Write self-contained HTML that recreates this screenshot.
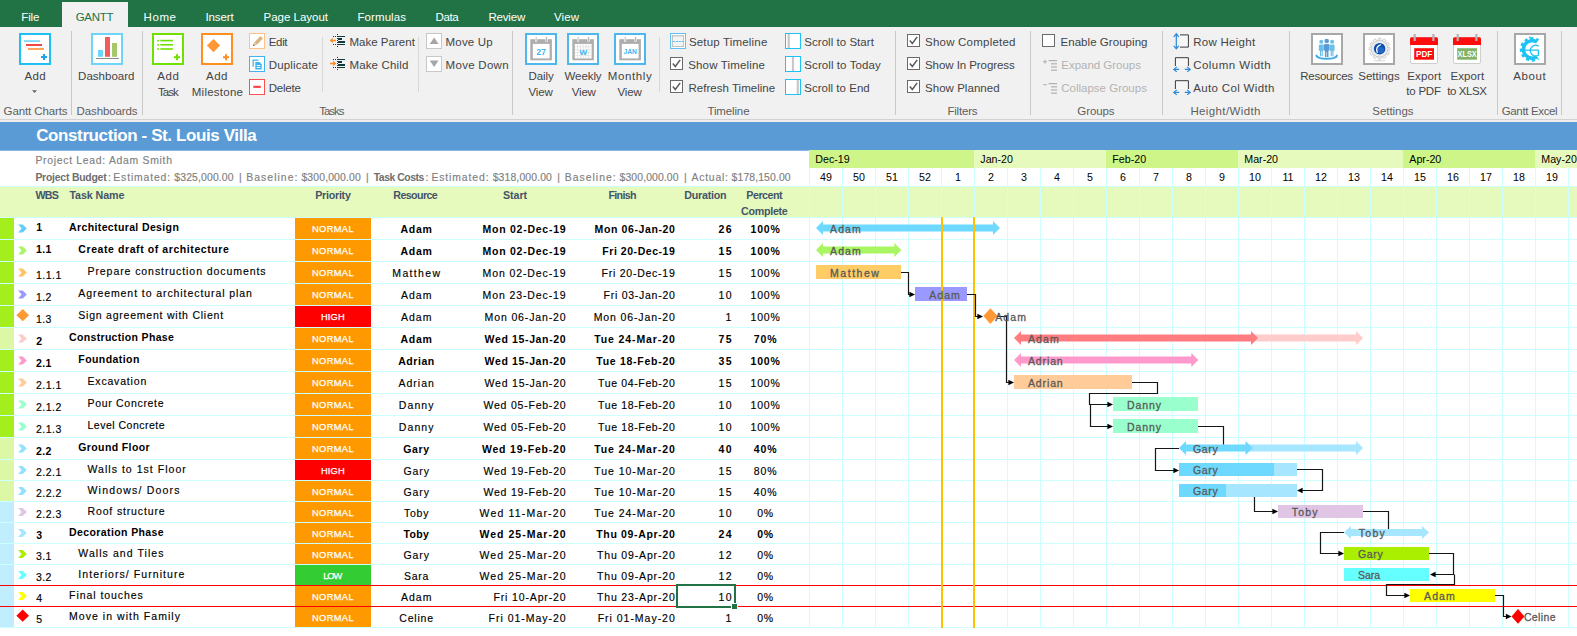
<!DOCTYPE html>
<html><head><meta charset="utf-8"><title>Gantt</title>
<style>
html,body{margin:0;padding:0;background:#fff;}
body{width:1577px;height:636px;position:relative;overflow:hidden;font-family:"Liberation Sans",sans-serif;}
.t{position:absolute;white-space:nowrap;line-height:20px;font-family:"Liberation Sans",sans-serif;}
.s{-webkit-text-stroke:0.15px;}
</style></head><body>
<div style="position:absolute;left:0;top:121px;width:1577px;height:1px;background:#c6d6e6"></div>
<div style="position:absolute;left:0;top:122px;width:1577px;height:28px;background:#5b9bd5"></div>
<div style="position:absolute;left:0;top:150px;width:809px;height:1px;background:#8ab8e2"></div>
<div class="t" style="left:36.20px;top:126.00px;font-size:17px;color:#fff;font-weight:bold;letter-spacing:-0.394px;">Construction - St. Louis Villa</div>
<div class="t s" style="left:35.40px;top:151.00px;font-size:10.4px;color:#808080;letter-spacing:0.716px;">Project Lead: Adam Smith</div>
<div class="t" style="left:35.40px;top:168.00px;font-size:10.4px;color:#6e6e6e;font-weight:bold;letter-spacing:-0.203px;">Project Budget</div>
<div class="t s" style="left:107.90px;top:168.00px;font-size:10.4px;color:#808080;">:</div>
<div class="t s" style="left:113.30px;top:168.00px;font-size:10.4px;color:#808080;letter-spacing:0.862px;">Estimated:</div>
<div class="t s" style="left:174.30px;top:168.00px;font-size:10.4px;color:#808080;letter-spacing:0.148px;">$325,000.00</div>
<div class="t s" style="left:238.90px;top:168.00px;font-size:10.4px;color:#808080;">|</div>
<div class="t s" style="left:246.30px;top:168.00px;font-size:10.4px;color:#808080;letter-spacing:1.038px;">Baseline:</div>
<div class="t s" style="left:301.40px;top:168.00px;font-size:10.4px;color:#808080;letter-spacing:0.158px;">$300,000.00</div>
<div class="t s" style="left:366.10px;top:168.00px;font-size:10.4px;color:#808080;">|</div>
<div class="t s" style="left:425.50px;top:168.00px;font-size:10.4px;color:#808080;">:</div>
<div class="t s" style="left:431.40px;top:168.00px;font-size:10.4px;color:#808080;letter-spacing:0.896px;">Estimated:</div>
<div class="t s" style="left:492.70px;top:168.00px;font-size:10.4px;color:#808080;letter-spacing:0.138px;">$318,000.00</div>
<div class="t s" style="left:557.30px;top:168.00px;font-size:10.4px;color:#808080;">|</div>
<div class="t s" style="left:564.70px;top:168.00px;font-size:10.4px;color:#808080;letter-spacing:1.038px;">Baseline:</div>
<div class="t s" style="left:619.60px;top:168.00px;font-size:10.4px;color:#808080;letter-spacing:0.108px;">$300,000.00</div>
<div class="t s" style="left:684.10px;top:168.00px;font-size:10.4px;color:#808080;">|</div>
<div class="t s" style="left:691.40px;top:168.00px;font-size:10.4px;color:#808080;letter-spacing:0.805px;">Actual:</div>
<div class="t s" style="left:731.60px;top:168.00px;font-size:10.4px;color:#808080;letter-spacing:0.118px;">$178,150.00</div>
<div class="t" style="left:373.70px;top:168.00px;font-size:10.4px;color:#6e6e6e;font-weight:bold;letter-spacing:-0.456px;">Task Costs</div>
<div style="position:absolute;left:0;top:186px;width:1577px;height:31px;background:#e6fabd"></div>
<div style="position:absolute;left:809px;top:150px;width:165px;height:18px;background:#cdf587"></div>
<div class="t" style="left:815.30px;top:149.00px;font-size:10.67px;color:#000;">Dec-19</div>
<div style="position:absolute;left:974px;top:150px;width:132px;height:18px;background:#e6fabd"></div>
<div class="t" style="left:980.30px;top:149.00px;font-size:10.67px;color:#000;">Jan-20</div>
<div style="position:absolute;left:1106px;top:150px;width:132px;height:18px;background:#cdf587"></div>
<div class="t" style="left:1112.30px;top:149.00px;font-size:10.67px;color:#000;">Feb-20</div>
<div style="position:absolute;left:1238px;top:150px;width:165px;height:18px;background:#e6fabd"></div>
<div class="t" style="left:1244.30px;top:149.00px;font-size:10.67px;color:#000;">Mar-20</div>
<div style="position:absolute;left:1403px;top:150px;width:132px;height:18px;background:#cdf587"></div>
<div class="t" style="left:1409.30px;top:149.00px;font-size:10.67px;color:#000;">Apr-20</div>
<div style="position:absolute;left:1535px;top:150px;width:42px;height:18px;background:#e6fabd"></div>
<div class="t" style="left:1541.30px;top:149.00px;font-size:10.67px;color:#000;">May-20</div>
<div class="t" style="left:820.08px;top:167.00px;font-size:10.67px;color:#000;">49</div>
<div class="t" style="left:853.08px;top:167.00px;font-size:10.67px;color:#000;">50</div>
<div class="t" style="left:886.08px;top:167.00px;font-size:10.67px;color:#000;">51</div>
<div class="t" style="left:919.08px;top:167.00px;font-size:10.67px;color:#000;">52</div>
<div class="t" style="left:955.04px;top:167.00px;font-size:10.67px;color:#000;">1</div>
<div class="t" style="left:988.04px;top:167.00px;font-size:10.67px;color:#000;">2</div>
<div class="t" style="left:1021.04px;top:167.00px;font-size:10.67px;color:#000;">3</div>
<div class="t" style="left:1054.04px;top:167.00px;font-size:10.67px;color:#000;">4</div>
<div class="t" style="left:1087.04px;top:167.00px;font-size:10.67px;color:#000;">5</div>
<div class="t" style="left:1120.04px;top:167.00px;font-size:10.67px;color:#000;">6</div>
<div class="t" style="left:1153.04px;top:167.00px;font-size:10.67px;color:#000;">7</div>
<div class="t" style="left:1186.04px;top:167.00px;font-size:10.67px;color:#000;">8</div>
<div class="t" style="left:1219.04px;top:167.00px;font-size:10.67px;color:#000;">9</div>
<div class="t" style="left:1249.08px;top:167.00px;font-size:10.67px;color:#000;">10</div>
<div class="t" style="left:1282.45px;top:167.00px;font-size:10.67px;color:#000;">11</div>
<div class="t" style="left:1315.08px;top:167.00px;font-size:10.67px;color:#000;">12</div>
<div class="t" style="left:1348.08px;top:167.00px;font-size:10.67px;color:#000;">13</div>
<div class="t" style="left:1381.08px;top:167.00px;font-size:10.67px;color:#000;">14</div>
<div class="t" style="left:1414.08px;top:167.00px;font-size:10.67px;color:#000;">15</div>
<div class="t" style="left:1447.08px;top:167.00px;font-size:10.67px;color:#000;">16</div>
<div class="t" style="left:1480.08px;top:167.00px;font-size:10.67px;color:#000;">17</div>
<div class="t" style="left:1513.08px;top:167.00px;font-size:10.67px;color:#000;">18</div>
<div class="t" style="left:1546.08px;top:167.00px;font-size:10.67px;color:#000;">19</div>
<div class="t" style="left:35.50px;top:185.00px;font-size:10.7px;color:#44546a;font-weight:bold;letter-spacing:-0.792px;">WBS</div>
<div class="t" style="left:69.40px;top:185.00px;font-size:10.7px;color:#44546a;font-weight:bold;letter-spacing:-0.074px;">Task Name</div>
<div class="t" style="left:315.20px;top:185.00px;font-size:10.7px;color:#44546a;font-weight:bold;letter-spacing:-0.250px;">Priority</div>
<div class="t" style="left:393.30px;top:185.00px;font-size:10.7px;color:#44546a;font-weight:bold;letter-spacing:-0.613px;">Resource</div>
<div class="t" style="left:503.00px;top:185.00px;font-size:10.7px;color:#44546a;font-weight:bold;letter-spacing:-0.049px;">Start</div>
<div class="t" style="left:608.40px;top:185.00px;font-size:10.7px;color:#44546a;font-weight:bold;letter-spacing:-0.662px;">Finish</div>
<div class="t" style="left:684.30px;top:185.00px;font-size:10.7px;color:#44546a;font-weight:bold;letter-spacing:-0.240px;">Duration</div>
<div class="t" style="left:746.30px;top:185.00px;font-size:10.7px;color:#44546a;font-weight:bold;letter-spacing:-0.478px;">Percent</div>
<div class="t" style="left:741.10px;top:201.00px;font-size:10.7px;color:#44546a;font-weight:bold;letter-spacing:-0.291px;">Complete</div>
<div style="position:absolute;left:0;top:218px;width:14px;height:21px;background:#a5ee1e"></div>
<div style="position:absolute;left:295px;top:218px;width:76px;height:21px;background:#ff9900"></div>
<div class="t" style="left:36.30px;top:217.00px;font-size:10.5px;color:#000;font-weight:bold;">1</div>
<div class="t" style="left:69.10px;top:217.00px;font-size:10.5px;color:#000;font-weight:bold;letter-spacing:0.369px;">Architectural Design</div>
<div class="t" style="left:312.00px;top:219.00px;font-size:9.3px;color:#fff;letter-spacing:0.359px;-webkit-text-stroke:0.25px;">NORMAL</div>
<div class="t" style="left:400.60px;top:219.00px;font-size:10.5px;color:#000;font-weight:bold;letter-spacing:0.670px;">Adam</div>
<div class="t" style="left:482.60px;top:219.00px;font-size:10.5px;color:#000;font-weight:bold;letter-spacing:0.739px;">Mon 02-Dec-19</div>
<div class="t" style="left:594.60px;top:219.00px;font-size:10.5px;color:#000;font-weight:bold;letter-spacing:0.606px;">Mon 06-Jan-20</div>
<div class="t" style="left:718.40px;top:219.00px;font-size:10.5px;color:#000;font-weight:bold;letter-spacing:1.545px;">26</div>
<div class="t" style="left:750.60px;top:219.00px;font-size:10.5px;color:#000;font-weight:bold;letter-spacing:0.773px;">100%</div>
<div style="position:absolute;left:0;top:240px;width:14px;height:21px;background:#a5ee1e"></div>
<div style="position:absolute;left:295px;top:240px;width:76px;height:21px;background:#ff9900"></div>
<div class="t" style="left:35.90px;top:239.00px;font-size:10.5px;color:#000;font-weight:bold;letter-spacing:0.453px;">1.1</div>
<div class="t" style="left:78.30px;top:239.00px;font-size:10.5px;color:#000;font-weight:bold;letter-spacing:0.583px;">Create draft of architecture</div>
<div class="t" style="left:312.00px;top:241.00px;font-size:9.3px;color:#fff;letter-spacing:0.359px;-webkit-text-stroke:0.25px;">NORMAL</div>
<div class="t" style="left:400.60px;top:241.00px;font-size:10.5px;color:#000;font-weight:bold;letter-spacing:0.670px;">Adam</div>
<div class="t" style="left:482.60px;top:241.00px;font-size:10.5px;color:#000;font-weight:bold;letter-spacing:0.739px;">Mon 02-Dec-19</div>
<div class="t" style="left:602.30px;top:241.00px;font-size:10.5px;color:#000;font-weight:bold;letter-spacing:0.547px;">Fri 20-Dec-19</div>
<div class="t" style="left:718.40px;top:241.00px;font-size:10.5px;color:#000;font-weight:bold;letter-spacing:1.545px;">15</div>
<div class="t" style="left:750.60px;top:241.00px;font-size:10.5px;color:#000;font-weight:bold;letter-spacing:0.773px;">100%</div>
<div style="position:absolute;left:0;top:262px;width:14px;height:21px;background:#a5ee1e"></div>
<div style="position:absolute;left:295px;top:262px;width:76px;height:21px;background:#ff9900"></div>
<div class="t s" style="left:35.90px;top:265.00px;font-size:10.5px;color:#000;letter-spacing:0.534px;">1.1.1</div>
<div class="t s" style="left:87.50px;top:261.00px;font-size:10.5px;color:#000;letter-spacing:0.926px;">Prepare construction documents</div>
<div class="t" style="left:312.00px;top:263.00px;font-size:9.3px;color:#fff;letter-spacing:0.359px;-webkit-text-stroke:0.25px;">NORMAL</div>
<div class="t s" style="left:392.35px;top:263.00px;font-size:10.5px;color:#000;letter-spacing:1.335px;">Matthew</div>
<div class="t s" style="left:482.60px;top:263.00px;font-size:10.5px;color:#000;letter-spacing:0.888px;">Mon 02-Dec-19</div>
<div class="t s" style="left:601.60px;top:263.00px;font-size:10.5px;color:#000;letter-spacing:0.749px;">Fri 20-Dec-19</div>
<div class="t s" style="left:718.40px;top:263.00px;font-size:10.5px;color:#000;letter-spacing:1.545px;">15</div>
<div class="t s" style="left:750.60px;top:263.00px;font-size:10.5px;color:#000;letter-spacing:0.773px;">100%</div>
<div style="position:absolute;left:0;top:284px;width:14px;height:21px;background:#a5ee1e"></div>
<div style="position:absolute;left:295px;top:284px;width:76px;height:21px;background:#ff9900"></div>
<div class="t s" style="left:35.90px;top:287.00px;font-size:10.5px;color:#000;letter-spacing:0.453px;">1.2</div>
<div class="t s" style="left:78.30px;top:283.00px;font-size:10.5px;color:#000;letter-spacing:0.923px;">Agreement to architectural plan</div>
<div class="t" style="left:312.00px;top:285.00px;font-size:9.3px;color:#fff;letter-spacing:0.359px;-webkit-text-stroke:0.25px;">NORMAL</div>
<div class="t s" style="left:400.90px;top:285.00px;font-size:10.5px;color:#000;letter-spacing:1.065px;">Adam</div>
<div class="t s" style="left:482.60px;top:285.00px;font-size:10.5px;color:#000;letter-spacing:0.888px;">Mon 23-Dec-19</div>
<div class="t s" style="left:603.60px;top:285.00px;font-size:10.5px;color:#000;letter-spacing:0.731px;">Fri 03-Jan-20</div>
<div class="t s" style="left:718.40px;top:285.00px;font-size:10.5px;color:#000;letter-spacing:1.545px;">10</div>
<div class="t s" style="left:750.60px;top:285.00px;font-size:10.5px;color:#000;letter-spacing:0.773px;">100%</div>
<div style="position:absolute;left:0;top:306px;width:14px;height:21px;background:#a5ee1e"></div>
<div style="position:absolute;left:295px;top:306px;width:76px;height:21px;background:#ff0000"></div>
<div class="t s" style="left:35.90px;top:309.00px;font-size:10.5px;color:#000;letter-spacing:0.453px;">1.3</div>
<div class="t s" style="left:78.30px;top:305.00px;font-size:10.5px;color:#000;letter-spacing:0.773px;">Sign agreement with Client</div>
<div class="t" style="left:320.95px;top:307.00px;font-size:9.3px;color:#fff;letter-spacing:0.150px;-webkit-text-stroke:0.25px;">HIGH</div>
<div class="t s" style="left:400.90px;top:307.00px;font-size:10.5px;color:#000;letter-spacing:1.065px;">Adam</div>
<div class="t s" style="left:484.60px;top:307.00px;font-size:10.5px;color:#000;letter-spacing:0.866px;">Mon 06-Jan-20</div>
<div class="t s" style="left:593.70px;top:307.00px;font-size:10.5px;color:#000;letter-spacing:0.874px;">Mon 06-Jan-20</div>
<div class="t s" style="left:725.47px;top:307.00px;font-size:10.5px;color:#000;">1</div>
<div class="t s" style="left:750.60px;top:307.00px;font-size:10.5px;color:#000;letter-spacing:0.773px;">100%</div>
<div style="position:absolute;left:0;top:328px;width:14px;height:21px;background:#dcf7a6"></div>
<div style="position:absolute;left:295px;top:328px;width:76px;height:21px;background:#ff9900"></div>
<div class="t" style="left:36.30px;top:331.00px;font-size:10.5px;color:#000;font-weight:bold;">2</div>
<div class="t" style="left:69.10px;top:327.00px;font-size:10.5px;color:#000;font-weight:bold;letter-spacing:0.325px;">Construction Phase</div>
<div class="t" style="left:312.00px;top:329.00px;font-size:9.3px;color:#fff;letter-spacing:0.359px;-webkit-text-stroke:0.25px;">NORMAL</div>
<div class="t" style="left:400.60px;top:329.00px;font-size:10.5px;color:#000;font-weight:bold;letter-spacing:0.670px;">Adam</div>
<div class="t" style="left:484.60px;top:329.00px;font-size:10.5px;color:#000;font-weight:bold;letter-spacing:0.638px;">Wed 15-Jan-20</div>
<div class="t" style="left:594.20px;top:329.00px;font-size:10.5px;color:#000;font-weight:bold;letter-spacing:0.898px;">Tue 24-Mar-20</div>
<div class="t" style="left:718.40px;top:329.00px;font-size:10.5px;color:#000;font-weight:bold;letter-spacing:1.545px;">75</div>
<div class="t" style="left:753.70px;top:329.00px;font-size:10.5px;color:#000;font-weight:bold;letter-spacing:1.000px;">70%</div>
<div style="position:absolute;left:0;top:350px;width:14px;height:21px;background:#a5ee1e"></div>
<div style="position:absolute;left:295px;top:350px;width:76px;height:21px;background:#ff9900"></div>
<div class="t" style="left:35.90px;top:353.00px;font-size:10.5px;color:#000;font-weight:bold;letter-spacing:0.453px;">2.1</div>
<div class="t" style="left:78.30px;top:349.00px;font-size:10.5px;color:#000;font-weight:bold;letter-spacing:0.436px;">Foundation</div>
<div class="t" style="left:312.00px;top:351.00px;font-size:9.3px;color:#fff;letter-spacing:0.359px;-webkit-text-stroke:0.25px;">NORMAL</div>
<div class="t" style="left:398.25px;top:351.00px;font-size:10.5px;color:#000;font-weight:bold;letter-spacing:0.533px;">Adrian</div>
<div class="t" style="left:484.60px;top:351.00px;font-size:10.5px;color:#000;font-weight:bold;letter-spacing:0.638px;">Wed 15-Jan-20</div>
<div class="t" style="left:596.30px;top:351.00px;font-size:10.5px;color:#000;font-weight:bold;letter-spacing:0.723px;">Tue 18-Feb-20</div>
<div class="t" style="left:718.40px;top:351.00px;font-size:10.5px;color:#000;font-weight:bold;letter-spacing:1.545px;">35</div>
<div class="t" style="left:750.60px;top:351.00px;font-size:10.5px;color:#000;font-weight:bold;letter-spacing:0.773px;">100%</div>
<div style="position:absolute;left:0;top:372px;width:14px;height:21px;background:#a5ee1e"></div>
<div style="position:absolute;left:295px;top:372px;width:76px;height:21px;background:#ff9900"></div>
<div class="t s" style="left:35.90px;top:375.00px;font-size:10.5px;color:#000;letter-spacing:0.534px;">2.1.1</div>
<div class="t s" style="left:87.50px;top:371.00px;font-size:10.5px;color:#000;letter-spacing:0.817px;">Excavation</div>
<div class="t" style="left:312.00px;top:373.00px;font-size:9.3px;color:#fff;letter-spacing:0.359px;-webkit-text-stroke:0.25px;">NORMAL</div>
<div class="t s" style="left:398.55px;top:373.00px;font-size:10.5px;color:#000;letter-spacing:0.991px;">Adrian</div>
<div class="t s" style="left:484.60px;top:373.00px;font-size:10.5px;color:#000;letter-spacing:0.783px;">Wed 15-Jan-20</div>
<div class="t s" style="left:598.10px;top:373.00px;font-size:10.5px;color:#000;letter-spacing:0.634px;">Tue 04-Feb-20</div>
<div class="t s" style="left:718.40px;top:373.00px;font-size:10.5px;color:#000;letter-spacing:1.545px;">15</div>
<div class="t s" style="left:750.60px;top:373.00px;font-size:10.5px;color:#000;letter-spacing:0.773px;">100%</div>
<div style="position:absolute;left:0;top:394px;width:14px;height:21px;background:#a5ee1e"></div>
<div style="position:absolute;left:295px;top:394px;width:76px;height:21px;background:#ff9900"></div>
<div class="t s" style="left:35.90px;top:397.00px;font-size:10.5px;color:#000;letter-spacing:0.534px;">2.1.2</div>
<div class="t s" style="left:87.50px;top:393.00px;font-size:10.5px;color:#000;letter-spacing:0.698px;">Pour Concrete</div>
<div class="t" style="left:312.00px;top:395.00px;font-size:9.3px;color:#fff;letter-spacing:0.359px;-webkit-text-stroke:0.25px;">NORMAL</div>
<div class="t s" style="left:398.85px;top:395.00px;font-size:10.5px;color:#000;letter-spacing:1.089px;">Danny</div>
<div class="t s" style="left:483.50px;top:395.00px;font-size:10.5px;color:#000;letter-spacing:0.778px;">Wed 05-Feb-20</div>
<div class="t s" style="left:598.10px;top:395.00px;font-size:10.5px;color:#000;letter-spacing:0.634px;">Tue 18-Feb-20</div>
<div class="t s" style="left:718.40px;top:395.00px;font-size:10.5px;color:#000;letter-spacing:1.545px;">10</div>
<div class="t s" style="left:750.60px;top:395.00px;font-size:10.5px;color:#000;letter-spacing:0.773px;">100%</div>
<div style="position:absolute;left:0;top:416px;width:14px;height:21px;background:#a5ee1e"></div>
<div style="position:absolute;left:295px;top:416px;width:76px;height:21px;background:#ff9900"></div>
<div class="t s" style="left:35.90px;top:419.00px;font-size:10.5px;color:#000;letter-spacing:0.534px;">2.1.3</div>
<div class="t s" style="left:87.50px;top:415.00px;font-size:10.5px;color:#000;letter-spacing:0.499px;">Level Concrete</div>
<div class="t" style="left:312.00px;top:417.00px;font-size:9.3px;color:#fff;letter-spacing:0.359px;-webkit-text-stroke:0.25px;">NORMAL</div>
<div class="t s" style="left:398.85px;top:417.00px;font-size:10.5px;color:#000;letter-spacing:1.089px;">Danny</div>
<div class="t s" style="left:483.50px;top:417.00px;font-size:10.5px;color:#000;letter-spacing:0.778px;">Wed 05-Feb-20</div>
<div class="t s" style="left:598.10px;top:417.00px;font-size:10.5px;color:#000;letter-spacing:0.634px;">Tue 18-Feb-20</div>
<div class="t s" style="left:718.40px;top:417.00px;font-size:10.5px;color:#000;letter-spacing:1.545px;">10</div>
<div class="t s" style="left:750.60px;top:417.00px;font-size:10.5px;color:#000;letter-spacing:0.773px;">100%</div>
<div style="position:absolute;left:0;top:438px;width:14px;height:21px;background:#dcf7a6"></div>
<div style="position:absolute;left:295px;top:438px;width:76px;height:21px;background:#ff9900"></div>
<div class="t" style="left:35.90px;top:441.00px;font-size:10.5px;color:#000;font-weight:bold;letter-spacing:0.453px;">2.2</div>
<div class="t" style="left:78.30px;top:437.00px;font-size:10.5px;color:#000;font-weight:bold;letter-spacing:0.382px;">Ground Floor</div>
<div class="t" style="left:312.00px;top:439.00px;font-size:9.3px;color:#fff;letter-spacing:0.359px;-webkit-text-stroke:0.25px;">NORMAL</div>
<div class="t" style="left:403.20px;top:439.00px;font-size:10.5px;color:#000;font-weight:bold;letter-spacing:0.687px;">Gary</div>
<div class="t" style="left:481.90px;top:439.00px;font-size:10.5px;color:#000;font-weight:bold;letter-spacing:0.815px;">Wed 19-Feb-20</div>
<div class="t" style="left:594.20px;top:439.00px;font-size:10.5px;color:#000;font-weight:bold;letter-spacing:0.898px;">Tue 24-Mar-20</div>
<div class="t" style="left:718.40px;top:439.00px;font-size:10.5px;color:#000;font-weight:bold;letter-spacing:1.545px;">40</div>
<div class="t" style="left:753.70px;top:439.00px;font-size:10.5px;color:#000;font-weight:bold;letter-spacing:1.000px;">40%</div>
<div style="position:absolute;left:0;top:460px;width:14px;height:20px;background:#dcf7a6"></div>
<div style="position:absolute;left:295px;top:460px;width:76px;height:20px;background:#ff0000"></div>
<div class="t s" style="left:35.90px;top:462.00px;font-size:10.5px;color:#000;letter-spacing:0.534px;">2.2.1</div>
<div class="t s" style="left:87.50px;top:459.00px;font-size:10.5px;color:#000;letter-spacing:1.036px;">Walls to 1st Floor</div>
<div class="t" style="left:320.95px;top:461.00px;font-size:9.3px;color:#fff;letter-spacing:0.150px;-webkit-text-stroke:0.25px;">HIGH</div>
<div class="t s" style="left:403.50px;top:461.00px;font-size:10.5px;color:#000;letter-spacing:0.889px;">Gary</div>
<div class="t s" style="left:483.50px;top:461.00px;font-size:10.5px;color:#000;letter-spacing:0.778px;">Wed 19-Feb-20</div>
<div class="t s" style="left:594.20px;top:461.00px;font-size:10.5px;color:#000;letter-spacing:0.964px;">Tue 10-Mar-20</div>
<div class="t s" style="left:718.40px;top:461.00px;font-size:10.5px;color:#000;letter-spacing:1.545px;">15</div>
<div class="t s" style="left:753.70px;top:461.00px;font-size:10.5px;color:#000;letter-spacing:1.000px;">80%</div>
<div style="position:absolute;left:0;top:481px;width:14px;height:20px;background:#dcf7a6"></div>
<div style="position:absolute;left:295px;top:481px;width:76px;height:20px;background:#ff9900"></div>
<div class="t s" style="left:35.90px;top:483.00px;font-size:10.5px;color:#000;letter-spacing:0.534px;">2.2.2</div>
<div class="t s" style="left:87.50px;top:480.00px;font-size:10.5px;color:#000;letter-spacing:1.197px;">Windows/ Doors</div>
<div class="t" style="left:312.00px;top:482.00px;font-size:9.3px;color:#fff;letter-spacing:0.359px;-webkit-text-stroke:0.25px;">NORMAL</div>
<div class="t s" style="left:403.50px;top:482.00px;font-size:10.5px;color:#000;letter-spacing:0.889px;">Gary</div>
<div class="t s" style="left:483.50px;top:482.00px;font-size:10.5px;color:#000;letter-spacing:0.778px;">Wed 19-Feb-20</div>
<div class="t s" style="left:594.20px;top:482.00px;font-size:10.5px;color:#000;letter-spacing:0.964px;">Tue 10-Mar-20</div>
<div class="t s" style="left:718.40px;top:482.00px;font-size:10.5px;color:#000;letter-spacing:1.545px;">15</div>
<div class="t s" style="left:753.70px;top:482.00px;font-size:10.5px;color:#000;letter-spacing:1.000px;">40%</div>
<div style="position:absolute;left:0;top:502px;width:14px;height:20px;background:#c0eeff"></div>
<div style="position:absolute;left:295px;top:502px;width:76px;height:20px;background:#ff9900"></div>
<div class="t s" style="left:35.90px;top:504.00px;font-size:10.5px;color:#000;letter-spacing:0.534px;">2.2.3</div>
<div class="t s" style="left:87.50px;top:501.00px;font-size:10.5px;color:#000;letter-spacing:0.858px;">Roof structure</div>
<div class="t" style="left:312.00px;top:503.00px;font-size:9.3px;color:#fff;letter-spacing:0.359px;-webkit-text-stroke:0.25px;">NORMAL</div>
<div class="t s" style="left:403.90px;top:503.00px;font-size:10.5px;color:#000;letter-spacing:0.815px;">Toby</div>
<div class="t s" style="left:479.50px;top:503.00px;font-size:10.5px;color:#000;letter-spacing:1.177px;">Wed 11-Mar-20</div>
<div class="t s" style="left:594.20px;top:503.00px;font-size:10.5px;color:#000;letter-spacing:0.964px;">Tue 24-Mar-20</div>
<div class="t s" style="left:718.40px;top:503.00px;font-size:10.5px;color:#000;letter-spacing:1.545px;">10</div>
<div class="t s" style="left:757.30px;top:503.00px;font-size:10.5px;color:#000;letter-spacing:0.627px;">0%</div>
<div style="position:absolute;left:0;top:523px;width:14px;height:20px;background:#c0eeff"></div>
<div style="position:absolute;left:295px;top:523px;width:76px;height:20px;background:#ff9900"></div>
<div class="t" style="left:36.30px;top:525.00px;font-size:10.5px;color:#000;font-weight:bold;">3</div>
<div class="t" style="left:69.10px;top:522.00px;font-size:10.5px;color:#000;font-weight:bold;letter-spacing:0.392px;">Decoration Phase</div>
<div class="t" style="left:312.00px;top:524.00px;font-size:9.3px;color:#fff;letter-spacing:0.359px;-webkit-text-stroke:0.25px;">NORMAL</div>
<div class="t" style="left:403.60px;top:524.00px;font-size:10.5px;color:#000;font-weight:bold;letter-spacing:0.298px;">Toby</div>
<div class="t" style="left:479.50px;top:524.00px;font-size:10.5px;color:#000;font-weight:bold;letter-spacing:1.015px;">Wed 25-Mar-20</div>
<div class="t" style="left:596.30px;top:524.00px;font-size:10.5px;color:#000;font-weight:bold;letter-spacing:0.657px;">Thu 09-Apr-20</div>
<div class="t" style="left:718.40px;top:524.00px;font-size:10.5px;color:#000;font-weight:bold;letter-spacing:1.545px;">24</div>
<div class="t" style="left:757.30px;top:524.00px;font-size:10.5px;color:#000;font-weight:bold;letter-spacing:0.627px;">0%</div>
<div style="position:absolute;left:0;top:544px;width:14px;height:20px;background:#c0eeff"></div>
<div style="position:absolute;left:295px;top:544px;width:76px;height:20px;background:#ff9900"></div>
<div class="t s" style="left:35.90px;top:546.00px;font-size:10.5px;color:#000;letter-spacing:0.453px;">3.1</div>
<div class="t s" style="left:78.30px;top:543.00px;font-size:10.5px;color:#000;letter-spacing:1.068px;">Walls and Tiles</div>
<div class="t" style="left:312.00px;top:545.00px;font-size:9.3px;color:#fff;letter-spacing:0.359px;-webkit-text-stroke:0.25px;">NORMAL</div>
<div class="t s" style="left:403.50px;top:545.00px;font-size:10.5px;color:#000;letter-spacing:0.889px;">Gary</div>
<div class="t s" style="left:479.50px;top:545.00px;font-size:10.5px;color:#000;letter-spacing:1.111px;">Wed 25-Mar-20</div>
<div class="t s" style="left:597.00px;top:545.00px;font-size:10.5px;color:#000;letter-spacing:0.840px;">Thu 09-Apr-20</div>
<div class="t s" style="left:718.40px;top:545.00px;font-size:10.5px;color:#000;letter-spacing:1.545px;">12</div>
<div class="t s" style="left:757.30px;top:545.00px;font-size:10.5px;color:#000;letter-spacing:0.627px;">0%</div>
<div style="position:absolute;left:0;top:565px;width:14px;height:20px;background:#c0eeff"></div>
<div style="position:absolute;left:295px;top:565px;width:76px;height:20px;background:#33cc33"></div>
<div class="t s" style="left:35.90px;top:567.00px;font-size:10.5px;color:#000;letter-spacing:0.453px;">3.2</div>
<div class="t s" style="left:78.30px;top:564.00px;font-size:10.5px;color:#000;letter-spacing:1.069px;">Interiors/ Furniture</div>
<div class="t" style="left:323.20px;top:566.00px;font-size:9.3px;color:#fff;letter-spacing:-1.002px;-webkit-text-stroke:0.25px;">LOW</div>
<div class="t s" style="left:403.90px;top:566.00px;font-size:10.5px;color:#000;letter-spacing:0.798px;">Sara</div>
<div class="t s" style="left:479.50px;top:566.00px;font-size:10.5px;color:#000;letter-spacing:1.111px;">Wed 25-Mar-20</div>
<div class="t s" style="left:597.00px;top:566.00px;font-size:10.5px;color:#000;letter-spacing:0.840px;">Thu 09-Apr-20</div>
<div class="t s" style="left:718.40px;top:566.00px;font-size:10.5px;color:#000;letter-spacing:1.545px;">12</div>
<div class="t s" style="left:757.30px;top:566.00px;font-size:10.5px;color:#000;letter-spacing:0.627px;">0%</div>
<div style="position:absolute;left:0;top:586px;width:14px;height:20px;background:#c0eeff"></div>
<div style="position:absolute;left:295px;top:586px;width:76px;height:20px;background:#ff9900"></div>
<div class="t s" style="left:36.30px;top:588.00px;font-size:10.5px;color:#000;">4</div>
<div class="t s" style="left:69.10px;top:585.00px;font-size:10.5px;color:#000;letter-spacing:0.935px;">Final touches</div>
<div class="t" style="left:312.00px;top:587.00px;font-size:9.3px;color:#fff;letter-spacing:0.359px;-webkit-text-stroke:0.25px;">NORMAL</div>
<div class="t s" style="left:400.90px;top:587.00px;font-size:10.5px;color:#000;letter-spacing:1.065px;">Adam</div>
<div class="t s" style="left:493.40px;top:587.00px;font-size:10.5px;color:#000;letter-spacing:0.863px;">Fri 10-Apr-20</div>
<div class="t s" style="left:597.00px;top:587.00px;font-size:10.5px;color:#000;letter-spacing:0.840px;">Thu 23-Apr-20</div>
<div class="t s" style="left:718.40px;top:587.00px;font-size:10.5px;color:#000;letter-spacing:1.545px;">10</div>
<div class="t s" style="left:757.30px;top:587.00px;font-size:10.5px;color:#000;letter-spacing:0.627px;">0%</div>
<div style="position:absolute;left:0;top:607px;width:14px;height:20px;background:#c0eeff"></div>
<div style="position:absolute;left:295px;top:607px;width:76px;height:20px;background:#ff9900"></div>
<div class="t s" style="left:36.30px;top:609.00px;font-size:10.5px;color:#000;">5</div>
<div class="t s" style="left:69.10px;top:606.00px;font-size:10.5px;color:#000;letter-spacing:1.034px;">Move in with Family</div>
<div class="t" style="left:312.00px;top:608.00px;font-size:9.3px;color:#fff;letter-spacing:0.359px;-webkit-text-stroke:0.25px;">NORMAL</div>
<div class="t s" style="left:399.35px;top:608.00px;font-size:10.5px;color:#000;letter-spacing:0.787px;">Celine</div>
<div class="t s" style="left:488.60px;top:608.00px;font-size:10.5px;color:#000;letter-spacing:0.970px;">Fri 01-May-20</div>
<div class="t s" style="left:597.70px;top:608.00px;font-size:10.5px;color:#000;letter-spacing:0.978px;">Fri 01-May-20</div>
<div class="t s" style="left:725.47px;top:608.00px;font-size:10.5px;color:#000;">1</div>
<div class="t s" style="left:757.30px;top:608.00px;font-size:10.5px;color:#000;letter-spacing:0.627px;">0%</div>
<svg style="position:absolute;left:0;top:0" width="1577" height="636" viewBox="0 0 1577 636"><g fill="#ccffff" shape-rendering="crispEdges"><rect x="0" y="186" width="1577" height="1"/><rect x="0" y="217" width="1577" height="1"/><rect x="0" y="239" width="1577" height="1"/><rect x="0" y="261" width="1577" height="1"/><rect x="0" y="283" width="1577" height="1"/><rect x="0" y="305" width="1577" height="1"/><rect x="0" y="327" width="1577" height="1"/><rect x="0" y="349" width="1577" height="1"/><rect x="0" y="371" width="1577" height="1"/><rect x="0" y="393" width="1577" height="1"/><rect x="0" y="415" width="1577" height="1"/><rect x="0" y="437" width="1577" height="1"/><rect x="0" y="459" width="1577" height="1"/><rect x="0" y="480" width="1577" height="1"/><rect x="0" y="501" width="1577" height="1"/><rect x="0" y="522" width="1577" height="1"/><rect x="0" y="543" width="1577" height="1"/><rect x="0" y="564" width="1577" height="1"/><rect x="0" y="585" width="1577" height="1"/><rect x="0" y="606" width="1577" height="1"/><rect x="0" y="627" width="1577" height="1"/><rect x="809" y="168" width="1" height="460"/><rect x="842" y="168" width="1" height="460"/><rect x="875" y="168" width="1" height="460"/><rect x="908" y="168" width="1" height="460"/><rect x="941" y="168" width="1" height="460"/><rect x="974" y="168" width="1" height="460"/><rect x="1007" y="168" width="1" height="460"/><rect x="1040" y="168" width="1" height="460"/><rect x="1073" y="168" width="1" height="460"/><rect x="1106" y="168" width="1" height="460"/><rect x="1139" y="168" width="1" height="460"/><rect x="1172" y="168" width="1" height="460"/><rect x="1205" y="168" width="1" height="460"/><rect x="1238" y="168" width="1" height="460"/><rect x="1271" y="168" width="1" height="460"/><rect x="1304" y="168" width="1" height="460"/><rect x="1337" y="168" width="1" height="460"/><rect x="1370" y="168" width="1" height="460"/><rect x="1403" y="168" width="1" height="460"/><rect x="1436" y="168" width="1" height="460"/><rect x="1469" y="168" width="1" height="460"/><rect x="1502" y="168" width="1" height="460"/><rect x="1535" y="168" width="1" height="460"/><rect x="1568" y="168" width="1" height="460"/></g><rect x="0" y="585" width="1577" height="1" fill="#ff0000" shape-rendering="crispEdges"/><rect x="0" y="606" width="1577" height="1" fill="#ff0000" shape-rendering="crispEdges"/><path d="M18.1 224.4h4.6l4.1 4.1-4.1 4.1h-4.6l3.5-4.1z" fill="#62cdfa"/><path d="M18.1 246.4h4.6l4.1 4.1-4.1 4.1h-4.6l3.5-4.1z" fill="#a9f562"/><path d="M18.1 268.4h4.6l4.1 4.1-4.1 4.1h-4.6l3.5-4.1z" fill="#ffc266"/><path d="M18.1 290.4h4.6l4.1 4.1-4.1 4.1h-4.6l3.5-4.1z" fill="#9999ff"/><path d="M22.7 309.09999999999997l6.3 6.1-6.3 6.1-6.3-6.1z" fill="#ff9933"/><path d="M18.1 334.4h4.6l4.1 4.1-4.1 4.1h-4.6l3.5-4.1z" fill="#ffcccc"/><path d="M18.1 356.4h4.6l4.1 4.1-4.1 4.1h-4.6l3.5-4.1z" fill="#ff99cc"/><path d="M18.1 378.4h4.6l4.1 4.1-4.1 4.1h-4.6l3.5-4.1z" fill="#ffcc99"/><path d="M18.1 400.4h4.6l4.1 4.1-4.1 4.1h-4.6l3.5-4.1z" fill="#99ffcc"/><path d="M18.1 422.4h4.6l4.1 4.1-4.1 4.1h-4.6l3.5-4.1z" fill="#99ffcc"/><path d="M18.1 444.4h4.6l4.1 4.1-4.1 4.1h-4.6l3.5-4.1z" fill="#96e0ff"/><path d="M18.1 465.9h4.6l4.1 4.1-4.1 4.1h-4.6l3.5-4.1z" fill="#96e0ff"/><path d="M18.1 486.9h4.6l4.1 4.1-4.1 4.1h-4.6l3.5-4.1z" fill="#96e0ff"/><path d="M18.1 507.9h4.6l4.1 4.1-4.1 4.1h-4.6l3.5-4.1z" fill="#e0c5e5"/><path d="M18.1 528.9h4.6l4.1 4.1-4.1 4.1h-4.6l3.5-4.1z" fill="#a6e6ff"/><path d="M18.1 549.9h4.6l4.1 4.1-4.1 4.1h-4.6l3.5-4.1z" fill="#aaee00"/><path d="M18.1 570.9h4.6l4.1 4.1-4.1 4.1h-4.6l3.5-4.1z" fill="#66ffff"/><path d="M18.1 591.9h4.6l4.1 4.1-4.1 4.1h-4.6l3.5-4.1z" fill="#ffff00"/><path d="M22.7 609.6l6.3 6.1-6.3 6.1-6.3-6.1z" fill="#ff0000"/><polygon points="816.0,228.0 823.0,221.0 823.0,224.5 993.0,224.5 993.0,221.0 1000.0,228.0 993.0,235.0 993.0,231.5 823.0,231.5 823.0,235.0" fill="#6dd9ff"/><polygon points="816.0,250.0 823.0,243.0 823.0,246.5 894.3,246.5 894.3,243.0 901.3,250.0 894.3,257.0 894.3,253.5 823.0,253.5 823.0,257.0" fill="#a9f562"/><rect x="816" y="265" width="85" height="14" fill="#ffcc66" shape-rendering="crispEdges"/><rect x="915" y="287" width="52" height="14" fill="#9999ff" shape-rendering="crispEdges"/><path d="M990.4 308.3l7.1 7.8-7.1 7.8-7.1-7.8z" fill="#ff9933"/><polygon points="1251.0,334.5 1356.0,334.5 1356.0,331.0 1363.0,338.0 1356.0,345.0 1356.0,341.5 1251.0,341.5" fill="#ffcccc"/><polygon points="1014.0,338.0 1021.0,331.0 1021.0,334.5 1251.0,334.5 1251.0,331.0 1258.0,338.0 1251.0,345.0 1251.0,341.5 1021.0,341.5 1021.0,345.0" fill="#ff7c80"/><polygon points="1014.0,360.0 1021.0,353.0 1021.0,356.5 1191.3,356.5 1191.3,353.0 1198.3,360.0 1191.3,367.0 1191.3,363.5 1021.0,363.5 1021.0,367.0" fill="#ff99cc"/><rect x="1014" y="375" width="118" height="14" fill="#ffcc99" shape-rendering="crispEdges"/><rect x="1113" y="397" width="85" height="14" fill="#99ffcc" shape-rendering="crispEdges"/><rect x="1113" y="419" width="85" height="14" fill="#99ffcc" shape-rendering="crispEdges"/><polygon points="1246.0,444.5 1356.0,444.5 1356.0,441.0 1363.0,448.0 1356.0,455.0 1356.0,451.5 1246.0,451.5" fill="#a6e6ff"/><polygon points="1179.0,448.0 1186.0,441.0 1186.0,444.5 1245.6,444.5 1245.6,441.0 1252.6,448.0 1245.6,455.0 1245.6,451.5 1186.0,451.5 1186.0,455.0" fill="#6dd9ff"/><rect x="1179" y="463" width="118" height="13" fill="#a6e6ff" shape-rendering="crispEdges"/><rect x="1179" y="463" width="95" height="13" fill="#6dd9ff" shape-rendering="crispEdges"/><rect x="1179" y="484" width="118" height="13" fill="#a6e6ff" shape-rendering="crispEdges"/><rect x="1179" y="484" width="47" height="13" fill="#6dd9ff" shape-rendering="crispEdges"/><rect x="1278" y="505" width="85" height="13" fill="#e0c5e5" shape-rendering="crispEdges"/><polygon points="1344.0,532.5 1351.0,525.9 1351.0,529.1 1422.0,529.1 1422.0,525.9 1429.0,532.5 1422.0,539.1 1422.0,535.9 1351.0,535.9 1351.0,539.1" fill="#a6e6ff"/><rect x="1344" y="547" width="85" height="13" fill="#aaee00" shape-rendering="crispEdges"/><rect x="1344" y="568" width="85" height="13" fill="#66ffff" shape-rendering="crispEdges"/><rect x="1410" y="589" width="85" height="13" fill="#ffff00" shape-rendering="crispEdges"/><path d="M1518 609l6.5 7.4-6.5 7.4-6.5-7.4z" fill="#ff0000"/><rect x="941" y="217" width="2" height="411" fill="#ffc000" shape-rendering="crispEdges"/><rect x="973" y="217" width="2" height="411" fill="#ffc000" shape-rendering="crispEdges"/><path d="M901 272.5 L908.5 272.5 L908.5 294.5 L911 294.5" fill="none" stroke="#161616" stroke-width="1.2"/><path d="M915 294.5l-5.6 -2.7v5.4z" fill="#000"/><path d="M967 294.5 L975.5 294.5 L975.5 316.5 L979 316.5" fill="none" stroke="#161616" stroke-width="1.2"/><path d="M983 316.5l-5.6 -2.7v5.4z" fill="#000"/><path d="M997.5 316.5 L1006.5 316.5 L1006.5 382.5 L1010 382.5" fill="none" stroke="#161616" stroke-width="1.2"/><path d="M1014 382.5l-5.6 -2.7v5.4z" fill="#000"/><path d="M1132 382.5 L1157.5 382.5 L1157.5 393.5 L1089.5 393.5 L1089.5 404.5 L1109 404.5" fill="none" stroke="#161616" stroke-width="1.2"/><path d="M1113 404.5l-5.6 -2.7v5.4z" fill="#000"/><path d="M1090.5 404.5 L1090.5 426.5 L1109 426.5" fill="none" stroke="#161616" stroke-width="1.2"/><path d="M1113 426.5l-5.6 -2.7v5.4z" fill="#000"/><path d="M1198 426.5 L1223.5 426.5 L1223.5 444.5" fill="none" stroke="#161616" stroke-width="1.2"/><path d="M1179 448.5 L1155.5 448.5 L1155.5 470.5 L1175 470.5" fill="none" stroke="#161616" stroke-width="1.2"/><path d="M1179 470.5l-5.6 -2.7v5.4z" fill="#000"/><path d="M1297 469.5 L1322.5 469.5 L1322.5 490.5 L1301 490.5" fill="none" stroke="#161616" stroke-width="1.2"/><path d="M1297 490.5l5.6 -2.7v5.4z" fill="#000"/><path d="M1254.5 497 L1254.5 511.5 L1274 511.5" fill="none" stroke="#161616" stroke-width="1.2"/><path d="M1278 511.5l-5.6 -2.7v5.4z" fill="#000"/><path d="M1363 511.5 L1388.5 511.5 L1388.5 529" fill="none" stroke="#161616" stroke-width="1.2"/><path d="M1344 532.5 L1320.5 532.5 L1320.5 553.5 L1340 553.5" fill="none" stroke="#161616" stroke-width="1.2"/><path d="M1344 553.5l-5.6 -2.7v5.4z" fill="#000"/><path d="M1429 553.5 L1453.5 553.5 L1453.5 574.5 L1434 574.5" fill="none" stroke="#161616" stroke-width="1.2"/><path d="M1430 574.5l5.6 -2.7v5.4z" fill="#000"/><path d="M1454.5 574.5 L1454.5 584.5 L1386.5 584.5 L1386.5 595.5 L1406 595.5" fill="none" stroke="#161616" stroke-width="1.2"/><path d="M1410 595.5l-5.6 -2.7v5.4z" fill="#000"/><path d="M1495 595.5 L1503.5 595.5 L1503.5 616.5 L1507.5 616.5" fill="none" stroke="#161616" stroke-width="1.2"/><path d="M1511.5 616.5l-5.6 -2.7v5.4z" fill="#000"/><rect x="677" y="585" width="58" height="22" fill="none" stroke="#217346" stroke-width="2" shape-rendering="crispEdges"/><rect x="731" y="603" width="7" height="7" fill="#fff" shape-rendering="crispEdges"/><rect x="732" y="604" width="5" height="5" fill="#217346" shape-rendering="crispEdges"/></svg>
<div class="t s" style="left:830.10px;top:219.00px;font-size:10.5px;color:#595959;letter-spacing:1.065px;-webkit-text-stroke:0.3px;">Adam</div>
<div class="t s" style="left:830.10px;top:241.00px;font-size:10.5px;color:#595959;letter-spacing:1.065px;-webkit-text-stroke:0.3px;">Adam</div>
<div class="t s" style="left:830.10px;top:263.00px;font-size:10.5px;color:#595959;letter-spacing:1.518px;-webkit-text-stroke:0.3px;">Matthew</div>
<div class="t s" style="left:929.20px;top:285.00px;font-size:10.5px;color:#595959;letter-spacing:1.065px;-webkit-text-stroke:0.3px;">Adam</div>
<div class="t s" style="left:995.30px;top:307.00px;font-size:10.5px;color:#595959;letter-spacing:1.065px;-webkit-text-stroke:0.3px;">Adam</div>
<div class="t s" style="left:1028.00px;top:329.00px;font-size:10.5px;color:#595959;letter-spacing:1.065px;-webkit-text-stroke:0.3px;">Adam</div>
<div class="t s" style="left:1028.00px;top:351.00px;font-size:10.5px;color:#595959;letter-spacing:0.871px;-webkit-text-stroke:0.3px;">Adrian</div>
<div class="t s" style="left:1028.00px;top:373.00px;font-size:10.5px;color:#595959;letter-spacing:0.871px;-webkit-text-stroke:0.3px;">Adrian</div>
<div class="t s" style="left:1127.00px;top:395.00px;font-size:10.5px;color:#595959;letter-spacing:0.889px;-webkit-text-stroke:0.3px;">Danny</div>
<div class="t s" style="left:1127.00px;top:417.00px;font-size:10.5px;color:#595959;letter-spacing:0.889px;-webkit-text-stroke:0.3px;">Danny</div>
<div class="t s" style="left:1193.00px;top:439.00px;font-size:10.5px;color:#595959;letter-spacing:0.656px;-webkit-text-stroke:0.3px;">Gary</div>
<div class="t s" style="left:1193.00px;top:460.00px;font-size:10.5px;color:#595959;letter-spacing:0.656px;-webkit-text-stroke:0.3px;">Gary</div>
<div class="t s" style="left:1193.00px;top:481.00px;font-size:10.5px;color:#595959;letter-spacing:0.656px;-webkit-text-stroke:0.3px;">Gary</div>
<div class="t s" style="left:1291.70px;top:502.00px;font-size:10.5px;color:#595959;letter-spacing:1.248px;-webkit-text-stroke:0.3px;">Toby</div>
<div class="t s" style="left:1358.80px;top:523.00px;font-size:10.5px;color:#595959;letter-spacing:1.248px;-webkit-text-stroke:0.3px;">Toby</div>
<div class="t s" style="left:1358.00px;top:544.00px;font-size:10.5px;color:#595959;letter-spacing:0.656px;-webkit-text-stroke:0.3px;">Gary</div>
<div class="t s" style="left:1358.00px;top:565.00px;font-size:10.5px;color:#595959;-webkit-text-stroke:0.3px;">Sara</div>
<div class="t s" style="left:1424.10px;top:586.00px;font-size:10.5px;color:#595959;letter-spacing:1.065px;-webkit-text-stroke:0.3px;">Adam</div>
<div class="t s" style="left:1523.90px;top:607.00px;font-size:10.5px;color:#595959;letter-spacing:0.366px;-webkit-text-stroke:0.3px;">Celine</div>
<div style="position:absolute;left:0;top:0;width:1577px;height:27px;background:#217346"></div>
<div style="position:absolute;left:0;top:27px;width:1577px;height:92px;background:#f1f1f1"></div>
<div style="position:absolute;left:62px;top:2px;width:66px;height:26px;background:#f1f1f1"></div>
<div style="position:absolute;left:0;top:119px;width:1577px;height:1px;background:#d2d2d2"></div>
<div style="position:absolute;left:0;top:120px;width:1577px;height:2px;background:#f0ece9"></div>
<div class="t" style="left:21.30px;top:7.00px;font-size:11.5px;color:#fff;letter-spacing:-0.138px;">File</div>
<div class="t" style="left:75.70px;top:7.00px;font-size:11.5px;color:#217346;letter-spacing:-0.271px;">GANTT</div>
<div class="t" style="left:143.60px;top:7.00px;font-size:11.5px;color:#fff;letter-spacing:0.565px;">Home</div>
<div class="t" style="left:205.40px;top:7.00px;font-size:11.5px;color:#fff;letter-spacing:-0.110px;">Insert</div>
<div class="t" style="left:263.50px;top:7.00px;font-size:11.5px;color:#fff;letter-spacing:-0.007px;">Page Layout</div>
<div class="t" style="left:357.50px;top:7.00px;font-size:11.5px;color:#fff;letter-spacing:0.078px;">Formulas</div>
<div class="t" style="left:435.50px;top:7.00px;font-size:11.5px;color:#fff;letter-spacing:-0.374px;">Data</div>
<div class="t" style="left:488.40px;top:7.00px;font-size:11.5px;color:#fff;letter-spacing:-0.164px;">Review</div>
<div class="t" style="left:554.00px;top:7.00px;font-size:11.5px;color:#fff;letter-spacing:0.125px;">View</div>
<div class="t" style="left:24.40px;top:66.00px;font-size:11.5px;color:#444444;letter-spacing:0.415px;">Add</div>
<div class="t" style="left:78.10px;top:66.00px;font-size:11.5px;color:#444444;letter-spacing:0.008px;">Dashboard</div>
<div class="t" style="left:157.20px;top:66.00px;font-size:11.5px;color:#444444;letter-spacing:0.565px;">Add</div>
<div class="t" style="left:158.00px;top:82.00px;font-size:11.5px;color:#444444;letter-spacing:-0.963px;">Task</div>
<div class="t" style="left:205.90px;top:66.00px;font-size:11.5px;color:#444444;letter-spacing:0.565px;">Add</div>
<div class="t" style="left:191.80px;top:82.00px;font-size:11.5px;color:#444444;letter-spacing:0.247px;">Milestone</div>
<div class="t" style="left:268.70px;top:32.00px;font-size:11.5px;color:#444444;letter-spacing:-0.312px;">Edit</div>
<div class="t" style="left:268.70px;top:55.00px;font-size:11.5px;color:#444444;letter-spacing:0.168px;">Duplicate</div>
<div class="t" style="left:268.70px;top:78.00px;font-size:11.5px;color:#444444;letter-spacing:-0.227px;">Delete</div>
<div class="t" style="left:349.40px;top:32.00px;font-size:11.5px;color:#444444;letter-spacing:0.030px;">Make Parent</div>
<div class="t" style="left:349.40px;top:55.00px;font-size:11.5px;color:#444444;letter-spacing:0.167px;">Make Child</div>
<div class="t" style="left:445.60px;top:32.00px;font-size:11.5px;color:#444444;letter-spacing:0.183px;">Move Up</div>
<div class="t" style="left:445.60px;top:55.00px;font-size:11.5px;color:#444444;letter-spacing:0.285px;">Move Down</div>
<div class="t" style="left:528.60px;top:66.00px;font-size:11.5px;color:#444444;letter-spacing:-0.097px;">Daily</div>
<div class="t" style="left:528.60px;top:82.00px;font-size:11.5px;color:#444444;letter-spacing:-0.208px;">View</div>
<div class="t" style="left:564.50px;top:66.00px;font-size:11.5px;color:#444444;letter-spacing:-0.078px;">Weekly</div>
<div class="t" style="left:571.80px;top:82.00px;font-size:11.5px;color:#444444;letter-spacing:-0.208px;">View</div>
<div class="t" style="left:607.70px;top:66.00px;font-size:11.5px;color:#444444;letter-spacing:0.642px;">Monthly</div>
<div class="t" style="left:617.50px;top:82.00px;font-size:11.5px;color:#444444;letter-spacing:-0.108px;">View</div>
<div class="t" style="left:688.90px;top:32.00px;font-size:11.5px;color:#444444;letter-spacing:0.179px;">Setup Timeline</div>
<div class="t" style="left:688.20px;top:55.00px;font-size:11.5px;color:#444444;letter-spacing:0.166px;">Show Timeline</div>
<div class="t" style="left:688.50px;top:78.00px;font-size:11.5px;color:#444444;letter-spacing:0.026px;">Refresh Timeline</div>
<div class="t" style="left:804.30px;top:32.00px;font-size:11.5px;color:#444444;letter-spacing:0.036px;">Scroll to Start</div>
<div class="t" style="left:804.30px;top:55.00px;font-size:11.5px;color:#444444;letter-spacing:0.085px;">Scroll to Today</div>
<div class="t" style="left:804.30px;top:78.00px;font-size:11.5px;color:#444444;letter-spacing:0.016px;">Scroll to End</div>
<div class="t" style="left:925.00px;top:32.00px;font-size:11.5px;color:#444444;letter-spacing:0.225px;">Show Completed</div>
<div class="t" style="left:925.00px;top:55.00px;font-size:11.5px;color:#444444;letter-spacing:-0.066px;">Show In Progress</div>
<div class="t" style="left:925.00px;top:78.00px;font-size:11.5px;color:#444444;letter-spacing:0.039px;">Show Planned</div>
<div class="t" style="left:1060.50px;top:32.00px;font-size:11.5px;color:#444444;letter-spacing:0.049px;">Enable Grouping</div>
<div class="t" style="left:1193.20px;top:32.00px;font-size:11.5px;color:#444444;letter-spacing:0.272px;">Row Height</div>
<div class="t" style="left:1193.20px;top:55.00px;font-size:11.5px;color:#444444;letter-spacing:0.471px;">Column Width</div>
<div class="t" style="left:1193.20px;top:78.00px;font-size:11.5px;color:#444444;letter-spacing:0.346px;">Auto Col Width</div>
<div class="t" style="left:1300.30px;top:66.00px;font-size:11.5px;color:#444444;letter-spacing:-0.284px;">Resources</div>
<div class="t" style="left:1358.30px;top:66.00px;font-size:11.5px;color:#444444;letter-spacing:-0.025px;">Settings</div>
<div class="t" style="left:1407.30px;top:66.00px;font-size:11.5px;color:#444444;letter-spacing:0.133px;">Export</div>
<div class="t" style="left:1406.20px;top:81.00px;font-size:11.5px;color:#444444;letter-spacing:-0.193px;">to PDF</div>
<div class="t" style="left:1450.40px;top:66.00px;font-size:11.5px;color:#444444;letter-spacing:0.113px;">Export</div>
<div class="t" style="left:1447.30px;top:81.00px;font-size:11.5px;color:#444444;letter-spacing:-0.434px;">to XLSX</div>
<div class="t" style="left:1513.20px;top:66.00px;font-size:11.5px;color:#444444;letter-spacing:0.632px;">About</div>
<div class="t" style="left:1061.30px;top:55.00px;font-size:11.5px;color:#b3b3b3;letter-spacing:-0.027px;">Expand Groups</div>
<div class="t" style="left:1061.30px;top:78.00px;font-size:11.5px;color:#b3b3b3;letter-spacing:-0.005px;">Collapse Groups</div>
<div class="t" style="left:3.60px;top:101.00px;font-size:11.5px;color:#5e5e5e;letter-spacing:-0.119px;">Gantt Charts</div>
<div class="t" style="left:76.60px;top:101.00px;font-size:11.5px;color:#5e5e5e;letter-spacing:-0.121px;">Dashboards</div>
<div class="t" style="left:319.30px;top:101.00px;font-size:11.5px;color:#5e5e5e;letter-spacing:-1.046px;">Tasks</div>
<div class="t" style="left:707.50px;top:101.00px;font-size:11.5px;color:#5e5e5e;letter-spacing:-0.144px;">Timeline</div>
<div class="t" style="left:947.40px;top:101.00px;font-size:11.5px;color:#5e5e5e;letter-spacing:-0.197px;">Filters</div>
<div class="t" style="left:1077.30px;top:101.00px;font-size:11.5px;color:#5e5e5e;letter-spacing:-0.084px;">Groups</div>
<div class="t" style="left:1190.40px;top:101.00px;font-size:11.5px;color:#5e5e5e;letter-spacing:0.378px;">Height/Width</div>
<div class="t" style="left:1372.30px;top:101.00px;font-size:11.5px;color:#5e5e5e;letter-spacing:-0.053px;">Settings</div>
<div class="t" style="left:1501.70px;top:101.00px;font-size:11.5px;color:#5e5e5e;letter-spacing:-0.346px;">Gantt Excel</div>
<svg style="position:absolute;left:0;top:0" width="1577" height="122" viewBox="0 0 1577 122"><rect x="71" y="31" width="1" height="84" fill="#c8c8c8"/><rect x="142" y="31" width="1" height="84" fill="#c8c8c8"/><rect x="512" y="31" width="1" height="84" fill="#c8c8c8"/><rect x="895" y="31" width="1" height="84" fill="#c8c8c8"/><rect x="1030" y="31" width="1" height="84" fill="#c8c8c8"/><rect x="1162" y="31" width="1" height="84" fill="#c8c8c8"/><rect x="1289" y="31" width="1" height="84" fill="#c8c8c8"/><rect x="1497" y="31" width="1" height="84" fill="#c8c8c8"/><rect x="1561" y="31" width="1" height="84" fill="#c8c8c8"/><rect x="322" y="37" width="1" height="55" fill="#d8d8d8"/><rect x="418" y="37" width="1" height="55" fill="#d8d8d8"/><rect x="659" y="37" width="1" height="55" fill="#d8d8d8"/><rect x="20" y="34" width="30" height="30" fill="#fff" stroke="#1cc0f2" stroke-width="2"/><rect x="24" y="40.3" width="16" height="1.6" fill="#6dd5fa"/><rect x="26" y="44" width="16" height="2" fill="#f04848"/><rect x="28" y="48.1" width="16" height="1.8" fill="#ff9a4d"/><rect x="41" y="56.0" width="6" height="2" fill="#1ca8e8"/><rect x="43.0" y="54" width="2" height="6" fill="#1ca8e8"/><path d="M32 90.3h5l-2.5 2.8z" fill="#666"/><rect x="92" y="34" width="30" height="30" fill="#fff" stroke="#6dd5fa" stroke-width="2"/><rect x="98" y="50" width="5" height="6.8" fill="#6dd5fa"/><rect x="105" y="37" width="5" height="19.8" fill="#f25c5c"/><rect x="112" y="43" width="5" height="13.8" fill="#a5c96a"/><rect x="96" y="58" width="23" height="0.9" fill="#808080"/><rect x="153" y="34" width="30" height="30" fill="#fff" stroke="#70e000" stroke-width="2"/><rect x="157.3" y="39.800000000000004" width="1.8" height="1.6" fill="#70e000"/><rect x="160.3" y="39.800000000000004" width="12.6" height="1.6" fill="#70e000"/><rect x="157.3" y="44.0" width="1.8" height="1.6" fill="#70e000"/><rect x="160.3" y="44.0" width="12.6" height="1.6" fill="#70e000"/><rect x="157.3" y="48.2" width="1.8" height="1.6" fill="#70e000"/><rect x="160.3" y="48.2" width="12.6" height="1.6" fill="#70e000"/><rect x="174" y="56.2" width="6" height="2" fill="#70e000"/><rect x="176.0" y="54.2" width="2" height="6" fill="#70e000"/><rect x="202" y="34" width="30" height="30" fill="#fff" stroke="#ff9020" stroke-width="2"/><path d="M213.5 39l6.6 6.6-6.6 6.6-6.6-6.6z" fill="#ff9933"/><rect x="223" y="56.2" width="6" height="2" fill="#ff9020"/><rect x="225.0" y="54.2" width="2" height="6" fill="#ff9020"/><rect x="249.5" y="33.5" width="15" height="15" fill="#fff" stroke="#ffc08a"/><path d="M255.6 43.6L261.6 37.2" stroke="#d9b382" stroke-width="3.5" fill="none"/><path d="M253 46l0.9-3.4 2.6 2.4z" fill="#d9b382"/><path d="M253 46l0.35-1.5 1.1 1.05z" fill="#444"/><rect x="249.5" y="56.5" width="15" height="15" fill="#fff" stroke="#3eb5f0"/><path d="M252.5 59.5h6v1.3h-4.7v6h-1.3z" fill="#3eb5f0"/><path d="M255.3 62h4.2l2.2 2.2v5.3h-6.4z" fill="#3eb5f0"/><rect x="256.8" y="65" width="3.4" height="1" fill="#fff"/><rect x="256.8" y="67" width="3.4" height="1" fill="#fff"/><rect x="249.5" y="79.5" width="15" height="15" fill="#fff" stroke="#ff5050"/><rect x="253.3" y="85.8" width="7.5" height="2.1" fill="#ff4040"/><g shape-rendering="crispEdges"><rect x="337" y="34" width="1" height="1" fill="#12393b"/><rect x="337" y="36" width="1" height="1" fill="#12393b"/><rect x="337" y="38" width="1" height="1" fill="#12393b"/><rect x="337" y="40" width="1" height="1" fill="#12393b"/><rect x="337" y="42" width="1" height="1" fill="#12393b"/><rect x="337" y="44" width="1" height="1" fill="#12393b"/><rect x="337" y="46" width="1" height="1" fill="#12393b"/><rect x="338" y="36" width="7" height="1" fill="#12393b"/><rect x="338" y="38" width="4" height="2" fill="#12393b"/><rect x="338" y="41" width="7" height="2" fill="#12393b"/><rect x="338" y="44" width="7" height="1" fill="#12393b"/><rect x="333" y="36" width="1" height="1" fill="#12393b"/><rect x="335" y="36" width="1" height="1" fill="#12393b"/><rect x="333" y="44" width="1" height="1" fill="#12393b"/><rect x="335" y="44" width="1" height="1" fill="#12393b"/></g><path d="M329.8 40.5l3-2.8v2.1h3.2v1.4h-3.2v2.1z" fill="#ff8a1e"/><g shape-rendering="crispEdges"><rect x="337" y="57" width="1" height="1" fill="#12393b"/><rect x="337" y="59" width="1" height="1" fill="#12393b"/><rect x="337" y="61" width="1" height="1" fill="#12393b"/><rect x="337" y="63" width="1" height="1" fill="#12393b"/><rect x="337" y="65" width="1" height="1" fill="#12393b"/><rect x="337" y="67" width="1" height="1" fill="#12393b"/><rect x="337" y="69" width="1" height="1" fill="#12393b"/><rect x="338" y="59" width="7" height="1" fill="#12393b"/><rect x="338" y="61" width="4" height="2" fill="#12393b"/><rect x="338" y="64" width="7" height="2" fill="#12393b"/><rect x="338" y="67" width="7" height="1" fill="#12393b"/><rect x="333" y="59" width="1" height="1" fill="#12393b"/><rect x="335" y="59" width="1" height="1" fill="#12393b"/><rect x="333" y="67" width="1" height="1" fill="#12393b"/><rect x="335" y="67" width="1" height="1" fill="#12393b"/></g><path d="M336.2 63.5l-3-2.8v2.1h-3.2v1.4h3.2v2.1z" fill="#ff8a1e"/><rect x="426.5" y="33.5" width="15" height="15" fill="#fff" stroke="#c8c8c8"/><path d="M429.7 43.9h8.9l-4.45-6.4z" fill="#a6a6a6"/><rect x="426.5" y="56.5" width="15" height="15" fill="#fff" stroke="#c8c8c8"/><path d="M429.7 60.6h8.9l-4.45 6.4z" fill="#a6a6a6"/><rect x="526" y="34" width="30" height="30" fill="#fff" stroke="#4db8ee" stroke-width="2"/><rect x="530.3" y="39.2" width="21.6" height="21.1" fill="#adadad"/><rect x="532.8" y="43.9" width="16.8" height="14.5" fill="#fff"/><rect x="535.3" y="36.6" width="1.6" height="4.8" fill="#adadad" stroke="#fff" stroke-width="0.6"/><rect x="545.8" y="36.6" width="1.6" height="4.8" fill="#adadad" stroke="#fff" stroke-width="0.6"/><text x="541.2" y="54.9" text-anchor="middle" font-family="Liberation Sans, sans-serif" font-weight="bold" font-size="8.3" fill="#3eb5f0">27</text><rect x="568" y="34" width="30" height="30" fill="#fff" stroke="#4db8ee" stroke-width="2"/><rect x="572.3" y="39.2" width="21.6" height="21.1" fill="#adadad"/><rect x="574.8" y="43.9" width="16.8" height="14.5" fill="#fff"/><rect x="577.1999999999999" y="43.9" width="0.8" height="14.5" fill="#e2e2e2"/><rect x="580.0" y="43.9" width="0.8" height="14.5" fill="#e2e2e2"/><rect x="582.8" y="43.9" width="0.8" height="14.5" fill="#e2e2e2"/><rect x="585.6" y="43.9" width="0.8" height="14.5" fill="#e2e2e2"/><rect x="588.4" y="43.9" width="0.8" height="14.5" fill="#e2e2e2"/><rect x="574.8" y="46.4" width="16.8" height="0.8" fill="#e2e2e2"/><rect x="574.8" y="49.3" width="16.8" height="0.8" fill="#e2e2e2"/><rect x="574.8" y="52.199999999999996" width="16.8" height="0.8" fill="#e2e2e2"/><rect x="574.8" y="55.1" width="16.8" height="0.8" fill="#e2e2e2"/><rect x="577.3" y="36.6" width="1.6" height="4.8" fill="#adadad" stroke="#fff" stroke-width="0.6"/><rect x="587.8" y="36.6" width="1.6" height="4.8" fill="#adadad" stroke="#fff" stroke-width="0.6"/><text x="583.2" y="54.5" text-anchor="middle" font-family="Liberation Sans, sans-serif" font-weight="bold" font-size="8.1" fill="#3eb5f0">W</text><rect x="615" y="34" width="30" height="30" fill="#fff" stroke="#4db8ee" stroke-width="2"/><rect x="619.3" y="39.2" width="21.6" height="21.1" fill="#adadad"/><rect x="621.8" y="43.9" width="16.8" height="14.5" fill="#fff"/><rect x="624.3" y="36.6" width="1.6" height="4.8" fill="#adadad" stroke="#fff" stroke-width="0.6"/><rect x="634.8" y="36.6" width="1.6" height="4.8" fill="#adadad" stroke="#fff" stroke-width="0.6"/><text x="630.2" y="53.8" text-anchor="middle" font-family="Liberation Sans, sans-serif" font-weight="bold" font-size="6.7" fill="#3eb5f0">JAN</text><rect x="670.5" y="33.5" width="15" height="15" fill="#fff" stroke="#5cc3f2"/><rect x="672.5" y="35.5" width="11" height="11" fill="#f4f4f4" stroke="#c2c2c2" stroke-width="1"/><rect x="673" y="35" width="10" height="1.6" fill="#cfcfcf"/><path d="M673 41.5h10" stroke="#5cc3f2" stroke-width="1.2" stroke-dasharray="2.2 0.6"/><rect x="670.5" y="57.5" width="12" height="12" fill="#fff" stroke="#6a6a6a"/><path d="M672.8 63.6l2.5 2.9 4.9-6.6" fill="none" stroke="#5a5a5a" stroke-width="1.5"/><rect x="670.5" y="80.5" width="12" height="12" fill="#fff" stroke="#6a6a6a"/><path d="M672.8 86.6l2.5 2.9 4.9-6.6" fill="none" stroke="#5a5a5a" stroke-width="1.5"/><rect x="907.5" y="34.5" width="12" height="12" fill="#fff" stroke="#6a6a6a"/><path d="M909.8 40.6l2.5 2.9 4.9-6.6" fill="none" stroke="#5a5a5a" stroke-width="1.5"/><rect x="907.5" y="57.5" width="12" height="12" fill="#fff" stroke="#6a6a6a"/><path d="M909.8 63.6l2.5 2.9 4.9-6.6" fill="none" stroke="#5a5a5a" stroke-width="1.5"/><rect x="907.5" y="80.5" width="12" height="12" fill="#fff" stroke="#6a6a6a"/><path d="M909.8 86.6l2.5 2.9 4.9-6.6" fill="none" stroke="#5a5a5a" stroke-width="1.5"/><rect x="1042.5" y="34.5" width="12" height="12" fill="#fff" stroke="#6a6a6a"/><rect x="785.5" y="33.5" width="15" height="15" fill="#fff" stroke="#1fc3f3"/><rect x="787.6" y="34" width="2.2" height="14" fill="#c8c8c8"/><rect x="785.5" y="56.5" width="15" height="15" fill="#fff" stroke="#1fc3f3"/><rect x="791.9" y="57" width="2.2" height="14" fill="#c8c8c8"/><rect x="785.5" y="79.5" width="15" height="15" fill="#fff" stroke="#1fc3f3"/><rect x="796.7" y="80" width="2.2" height="14" fill="#c8c8c8"/><rect x="1043" y="61.2" width="4" height="1" fill="#b0b0b0"/><rect x="1044.5" y="59.7" width="1" height="4" fill="#b0b0b0"/><rect x="1048.5" y="60" width="8.5" height="1.2" fill="#b0b0b0"/><rect x="1051" y="63.2" width="6" height="1.2" fill="#b0b0b0"/><rect x="1051" y="66.4" width="6" height="1.2" fill="#b0b0b0"/><rect x="1051" y="69.6" width="6" height="1.2" fill="#b0b0b0"/><rect x="1043" y="84.2" width="4" height="1" fill="#b0b0b0"/><rect x="1048.5" y="83" width="8.5" height="1.2" fill="#b0b0b0"/><rect x="1051" y="86.2" width="6" height="1.2" fill="#b0b0b0"/><rect x="1051" y="89.4" width="6" height="1.2" fill="#b0b0b0"/><rect x="1051" y="92.6" width="6" height="1.2" fill="#b0b0b0"/><path d="M1180 34.9h8.4v12.2h-8.4" fill="#f6f6f6" stroke="#3a3a3a" stroke-width="1"/><path d="M1176.3 34v14.5" stroke="#2b88d8" stroke-width="1.2" fill="none"/><path d="M1173.8 36.8l2.5-3 2.5 3M1173.8 45.8l2.5 3 2.5-3" stroke="#2b88d8" stroke-width="1.2" fill="none"/><path d="M1175.4 66v-8.3h13v8.3" fill="#f6f6f6" stroke="#3a3a3a" stroke-width="1"/><path d="M1174.2 69.4h5M1184.8 69.4h5" stroke="#2b88d8" stroke-width="1.2" fill="none"/><path d="M1176.8 66.9l-3 2.5 3 2.5M1187.2 66.9l3 2.5-3 2.5" stroke="#2b88d8" stroke-width="1.2" fill="none"/><path d="M1175.4 89v-8.3h13v8.3" fill="#f6f6f6" stroke="#3a3a3a" stroke-width="1"/><path d="M1174.2 92.4h5M1184.8 92.4h5" stroke="#2b88d8" stroke-width="1.2" fill="none"/><path d="M1176.8 89.9l-3 2.5 3 2.5M1187.2 89.9l3 2.5-3 2.5" stroke="#2b88d8" stroke-width="1.2" fill="none"/><rect x="1312" y="34" width="30" height="30" fill="#fff" stroke="#a8a8a8" stroke-width="2"/><path d="M1316.4 55.6A10.4 3.7 0 0 0 1337 55.6" fill="none" stroke="#3fa9e8" stroke-width="2" stroke-linecap="round"/><circle cx="1321.3" cy="41.7" r="2.0" fill="#6cc0e8"/><path d="M1320.05 44.4h2.5000000000000004a1.2 1.2 0 0 1 1.2 1.2v5.2h-1v5.400000000000004h-1.20v-5h-0.5v5h-1.20v-5.400000000000004h-1v-5.2a1.2 1.2 0 0 1 1.2-1.2z" fill="#6cc0e8"/><circle cx="1332.1" cy="41.7" r="2.0" fill="#6cc0e8"/><path d="M1330.85 44.4h2.5000000000000004a1.2 1.2 0 0 1 1.2 1.2v5.2h-1v5.400000000000004h-1.20v-5h-0.5v5h-1.20v-5.400000000000004h-1v-5.2a1.2 1.2 0 0 1 1.2-1.2z" fill="#6cc0e8"/><circle cx="1326.7" cy="41.0" r="2.3" fill="#5b9bd5"/><path d="M1325.1000000000001 44.0h3.1999999999999997a1.2 1.2 0 0 1 1.2 1.2v5.2h-1v6.6h-1.55v-5h-0.5v5h-1.55v-6.6h-1v-5.2a1.2 1.2 0 0 1 1.2-1.2z" fill="#5b9bd5"/><rect x="1364" y="34" width="30" height="30" fill="#fff" stroke="#a8a8a8" stroke-width="2"/><rect x="1378.1" y="38.1" width="3" height="3.4" rx="0.9" fill="#f4f4f4" stroke="#c6c6c6" stroke-width="0.8" transform="rotate(0 1379.6 48.7)"/><rect x="1378.1" y="38.1" width="3" height="3.4" rx="0.9" fill="#f4f4f4" stroke="#c6c6c6" stroke-width="0.8" transform="rotate(30 1379.6 48.7)"/><rect x="1378.1" y="38.1" width="3" height="3.4" rx="0.9" fill="#f4f4f4" stroke="#c6c6c6" stroke-width="0.8" transform="rotate(60 1379.6 48.7)"/><rect x="1378.1" y="38.1" width="3" height="3.4" rx="0.9" fill="#f4f4f4" stroke="#c6c6c6" stroke-width="0.8" transform="rotate(90 1379.6 48.7)"/><rect x="1378.1" y="38.1" width="3" height="3.4" rx="0.9" fill="#f4f4f4" stroke="#c6c6c6" stroke-width="0.8" transform="rotate(120 1379.6 48.7)"/><rect x="1378.1" y="38.1" width="3" height="3.4" rx="0.9" fill="#f4f4f4" stroke="#c6c6c6" stroke-width="0.8" transform="rotate(150 1379.6 48.7)"/><rect x="1378.1" y="38.1" width="3" height="3.4" rx="0.9" fill="#f4f4f4" stroke="#c6c6c6" stroke-width="0.8" transform="rotate(180 1379.6 48.7)"/><rect x="1378.1" y="38.1" width="3" height="3.4" rx="0.9" fill="#f4f4f4" stroke="#c6c6c6" stroke-width="0.8" transform="rotate(210 1379.6 48.7)"/><rect x="1378.1" y="38.1" width="3" height="3.4" rx="0.9" fill="#f4f4f4" stroke="#c6c6c6" stroke-width="0.8" transform="rotate(240 1379.6 48.7)"/><rect x="1378.1" y="38.1" width="3" height="3.4" rx="0.9" fill="#f4f4f4" stroke="#c6c6c6" stroke-width="0.8" transform="rotate(270 1379.6 48.7)"/><rect x="1378.1" y="38.1" width="3" height="3.4" rx="0.9" fill="#f4f4f4" stroke="#c6c6c6" stroke-width="0.8" transform="rotate(300 1379.6 48.7)"/><rect x="1378.1" y="38.1" width="3" height="3.4" rx="0.9" fill="#f4f4f4" stroke="#c6c6c6" stroke-width="0.8" transform="rotate(330 1379.6 48.7)"/><circle cx="1379.6" cy="48.7" r="8.3" fill="#f6f6f6" stroke="#c9c9c9" stroke-width="0.9"/><circle cx="1379.6" cy="48.7" r="6.7" fill="#fff" stroke="#dadada" stroke-width="0.7"/><circle cx="1379.6" cy="48.7" r="5.8" fill="#0d4fae"/><circle cx="1380.8999999999999" cy="50.2" r="3.1" fill="#2468c6"/><path d="M1380.3999999999999 44.800000000000004Q1375.3999999999999 46.5 1377.1999999999998 52.300000000000004" fill="none" stroke="#fff" stroke-width="1.3" stroke-linecap="round"/><ellipse cx="1379.6" cy="60.6" rx="6.5" ry="0.9" fill="#e0e0e0"/><rect x="1410.5" y="37.5" width="27" height="26" rx="1.5" fill="#fff" stroke="#cfcfcf"/><path d="M1410 45v-6.2a1.5 1.5 0 0 1 1.5-1.5h25a1.5 1.5 0 0 1 1.5 1.5v6.2z" fill="#ff0d0d"/><rect x="1413.6" y="34" width="2.2" height="7" fill="#b4b4b4"/><rect x="1432.3" y="34" width="2.2" height="7" fill="#b4b4b4"/><rect x="1414.2" y="48.2" width="19.8" height="11.5" fill="#ff0d0d"/><text x="1424.1" y="57" text-anchor="middle" font-family="Liberation Sans, sans-serif" font-weight="bold" font-size="8.4" fill="#fff" textLength="16.2" lengthAdjust="spacingAndGlyphs">PDF</text><rect x="1453.5" y="37.5" width="27" height="26" rx="1.5" fill="#fff" stroke="#cfcfcf"/><path d="M1453 45v-6.2a1.5 1.5 0 0 1 1.5-1.5h25a1.5 1.5 0 0 1 1.5 1.5v6.2z" fill="#ff0d0d"/><rect x="1456.6" y="34" width="2.2" height="7" fill="#b4b4b4"/><rect x="1475.3" y="34" width="2.2" height="7" fill="#b4b4b4"/><rect x="1457.2" y="48.2" width="19.8" height="11.5" fill="#82b366"/><text x="1467.1" y="57" text-anchor="middle" font-family="Liberation Sans, sans-serif" font-weight="bold" font-size="8.4" fill="#fff" textLength="19" lengthAdjust="spacingAndGlyphs">XLSX</text><rect x="1515" y="34" width="30" height="30" fill="#fff" stroke="#a8a8a8" stroke-width="2"/><path d="M1537 42A8.8 8.8 0 1 0 1537 56.8" fill="none" stroke="#1fc3f3" stroke-width="3.6"/><path d="M1538.4 40.4A11 11 0 1 0 1538.4 58.4" fill="none" stroke="#1fc3f3" stroke-width="2.6" stroke-dasharray="3.1 2.8" stroke-dashoffset="0.5"/><path d="M1528.5 38.2l1.4-2.2 1 2.4z" fill="#1fc3f3"/><path d="M1538.7 46.3A5.3 5.3 0 1 0 1538.4 55.2V50.1H1525" fill="none" stroke="#1fc3f3" stroke-width="1.3"/></svg>
</body></html>
